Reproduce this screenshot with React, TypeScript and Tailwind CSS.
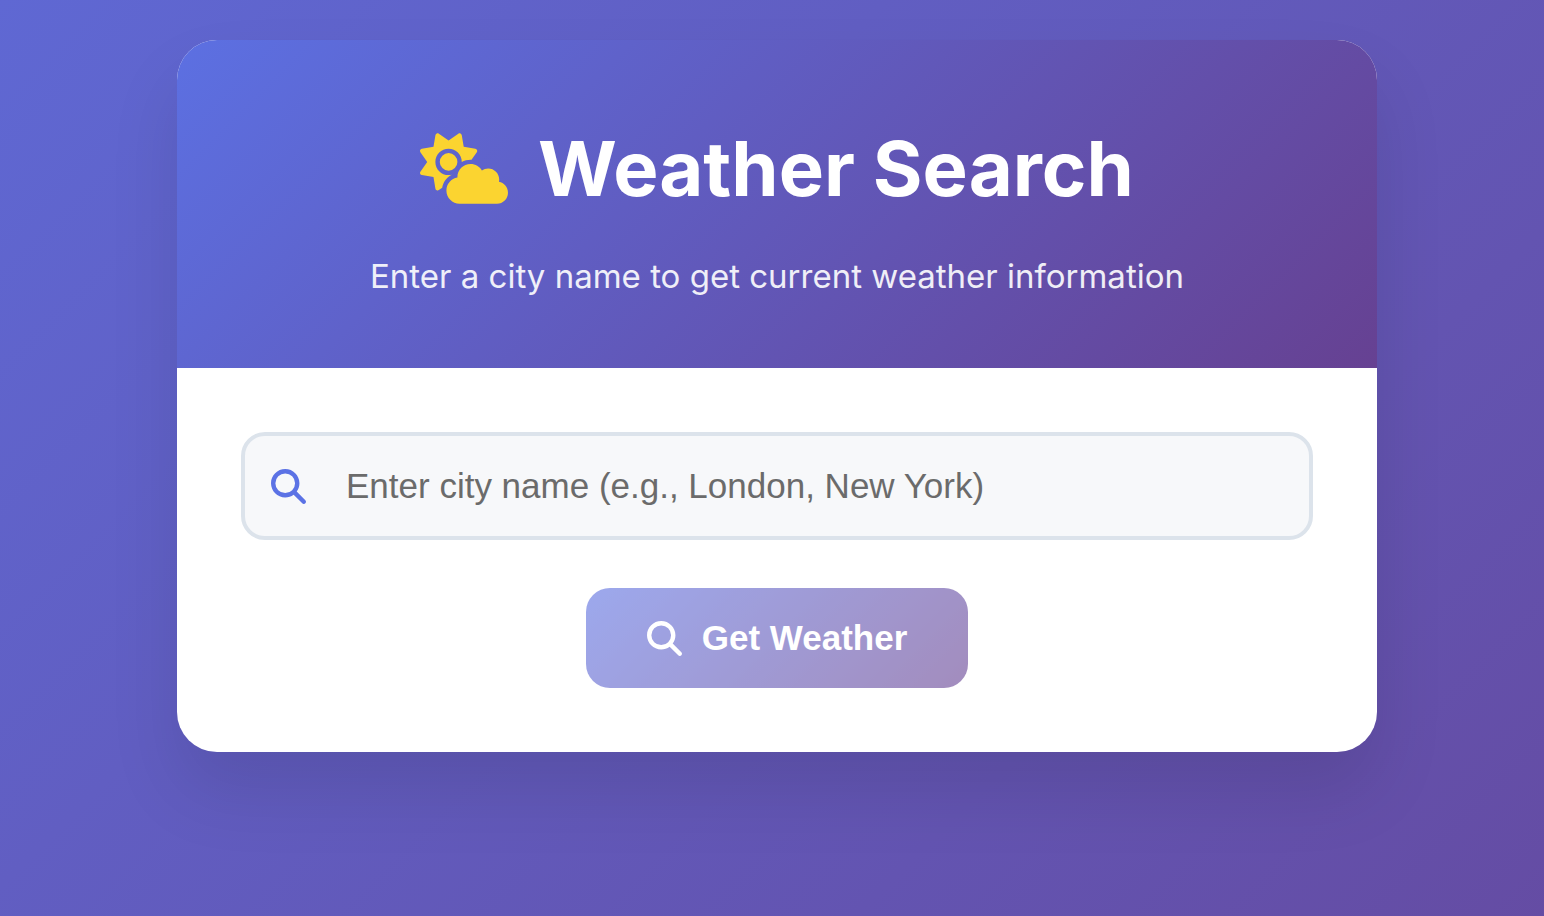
import { FaCloudSun, FaMagnifyingGlass } from "react-icons/fa6";

export default function App() {
  return (
    <main className="min-h-screen bg-linear-[135deg,#5f68d3_0%,#654aa0_108%] py-10 pr-5 pl-[30px] font-['Inter',sans-serif]">
      <section className="mx-auto max-w-[1200px] overflow-hidden rounded-[40px] bg-white shadow-[0_40px_70px_rgba(0,0,0,0.1)]">
        <header className="bg-linear-[135deg,#5c70e2_0%,#664192_100%] p-16 text-center text-white">
          <h1 className="flex items-center justify-center gap-[30px] text-[76px] leading-32 font-bold">
            <FaCloudSun className="h-[71px] w-[88px] text-[#fbd430]" aria-hidden="true" />
            Weather Search
          </h1>
          <p className="mt-4 text-[33px] leading-14 opacity-90">
            Enter a city name to get current weather information
          </p>
        </header>
        <form className="flex flex-col items-center gap-12 p-16" onSubmit={(e) => e.preventDefault()}>
          <div className="flex w-full items-center gap-10 rounded-3xl border-4 border-[#dce3eb] bg-[#f7f8fa] px-[26px]">
            <label htmlFor="city" aria-label="City name">
              <FaMagnifyingGlass className="text-[35px] text-[#5b72e5]" aria-hidden="true" />
            </label>
            <input
              id="city"
              type="text"
              className="h-25 min-w-0 flex-1 bg-transparent font-['Liberation_Sans',sans-serif] text-[35px] outline-none placeholder:text-[#6b6b6b]"
              placeholder="Enter city name (e.g., London, New York)"
            />
          </div>
          <button
            type="submit"
            className="flex h-25 items-center gap-5 rounded-3xl bg-linear-[135deg,#5c70e2_0%,#664192_100%] px-[61px] font-['Liberation_Sans',sans-serif] text-[35px] font-bold text-white opacity-60"
          >
            <FaMagnifyingGlass aria-hidden="true" />
            Get Weather
          </button>
        </form>
      </section>
    </main>
  );
}
